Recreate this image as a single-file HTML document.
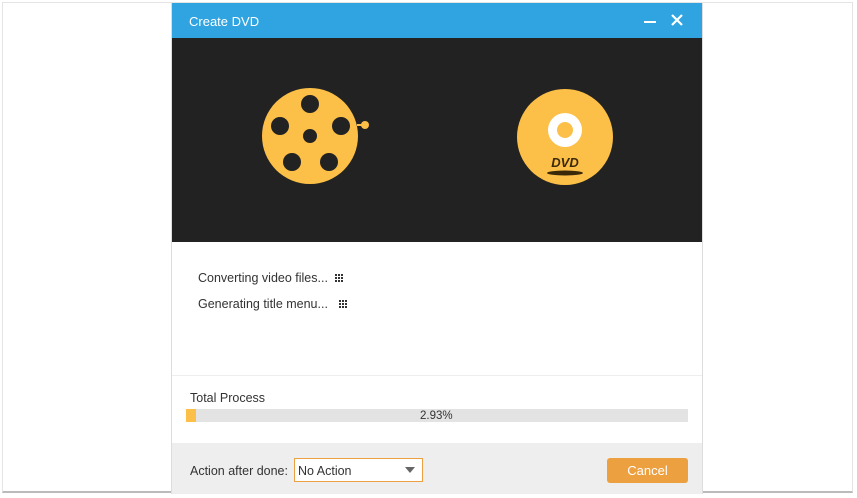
<!DOCTYPE html>
<html><head><style>
body{margin:0;width:857px;height:498px;background:#fff;position:relative;font-family:"Liberation Sans","DejaVu Sans",sans-serif;overflow:hidden}
.frame{position:absolute;left:2px;top:2px;width:851px;height:491px;border:1px solid #e4e4e4;border-bottom:2px solid #bbb;box-sizing:border-box}
.win{position:absolute;left:171px;top:3px;width:532px;height:491px;background:#fff;border-left:1px solid #ddd;border-right:1px solid #ddd;box-sizing:border-box}
.title{position:absolute;left:0;top:0;width:100%;height:35px;background:#2fa4e1;color:#fff;font-size:13px}
.dark{position:absolute;left:0;top:35px;width:100%;height:204px;background:#222}
.t{position:absolute;font-size:12.5px;color:#333;white-space:nowrap}
</style></head><body>
<div class="frame"></div>
<div class="win">
 <div class="title"><span style="position:absolute;left:17px;top:11px">Create DVD</span>
  <div style="position:absolute;left:472px;top:18px;width:12px;height:2px;background:#fff"></div>
  <svg style="position:absolute;left:499px;top:11px" width="12" height="12"><path d="M1 1L11 11M11 1L1 11" stroke="#fff" stroke-width="2.2"/></svg>
 </div>
 <div class="dark">
  <svg width="532" height="204">
   <line x1="185" y1="87" x2="193" y2="87" stroke="#fcbf47" stroke-width="2"/>
   <circle cx="193" cy="87" r="4" fill="#fcbf47"/>
   <circle cx="138" cy="98" r="48" fill="#fcbf47"/>
   <g fill="#222"><circle cx="138" cy="98" r="7"/><circle cx="138" cy="66" r="9"/><circle cx="108" cy="88" r="9"/><circle cx="169" cy="88" r="9"/><circle cx="120" cy="124" r="9"/><circle cx="157" cy="124" r="9"/></g>
   <circle cx="393" cy="99" r="48" fill="#fcbf47"/>
   <circle cx="393" cy="92" r="17" fill="#fff"/><circle cx="393" cy="92" r="8" fill="#fcbf47"/>
   <text x="393" y="129" text-anchor="middle" font-size="13" font-weight="bold" font-style="italic" fill="#3a2a0a" font-family="Liberation Sans">DVD</text>
   <ellipse cx="393" cy="135" rx="18" ry="2.5" fill="#3a2a0a"/>
  </svg>
 </div>
 <div class="t" style="left:26px;top:268px">Converting video files...</div>
 <svg style="position:absolute;left:163px;top:271px" width="9" height="9" fill="#333"><rect x="0" y="0" width="2" height="2"/><rect x="3" y="0" width="2" height="2"/><rect x="6" y="0" width="2" height="2"/><rect x="0" y="3" width="2" height="2"/><rect x="3" y="3" width="2" height="2"/><rect x="6" y="3" width="2" height="2"/><rect x="0" y="6" width="2" height="2"/><rect x="3" y="6" width="2" height="2"/><rect x="6" y="6" width="2" height="2"/></svg>
 <div class="t" style="left:26px;top:294px">Generating title menu...</div>
 <svg style="position:absolute;left:167px;top:297px" width="9" height="9" fill="#333"><rect x="0" y="0" width="2" height="2"/><rect x="3" y="0" width="2" height="2"/><rect x="6" y="0" width="2" height="2"/><rect x="0" y="3" width="2" height="2"/><rect x="3" y="3" width="2" height="2"/><rect x="6" y="3" width="2" height="2"/><rect x="0" y="6" width="2" height="2"/><rect x="3" y="6" width="2" height="2"/><rect x="6" y="6" width="2" height="2"/></svg>
 <div style="position:absolute;left:0;top:372px;width:100%;height:1px;background:#eee"></div>
 <div class="t" style="left:18px;top:388px">Total Process</div>
 <div style="position:absolute;left:14px;top:406px;width:502px;height:13px;background:#e3e3e3"></div>
 <div style="position:absolute;left:14px;top:406px;width:10px;height:13px;background:#fcbf47"></div>
 <div class="t" style="left:248px;top:407px;font-size:11.5px">2.93%</div>
 <div style="position:absolute;left:0;top:440px;width:100%;height:51px;background:#eeeeee"></div>
 <div class="t" style="left:18px;top:461px">Action after done:</div>
 <div style="position:absolute;left:122px;top:455px;width:129px;height:24px;border:1px solid #eda040;background:#fff;box-sizing:border-box"></div>
 <div class="t" style="left:126px;top:461px">No Action</div>
 <svg style="position:absolute;left:233px;top:464px" width="10" height="6"><path d="M0 0H10L5 6Z" fill="#666"/></svg>
 <div style="position:absolute;left:435px;top:455px;width:81px;height:25px;background:#eda040;border-radius:3px;color:#fff;font-size:13px;text-align:center;line-height:25px">Cancel</div>
</div>
</body></html>
